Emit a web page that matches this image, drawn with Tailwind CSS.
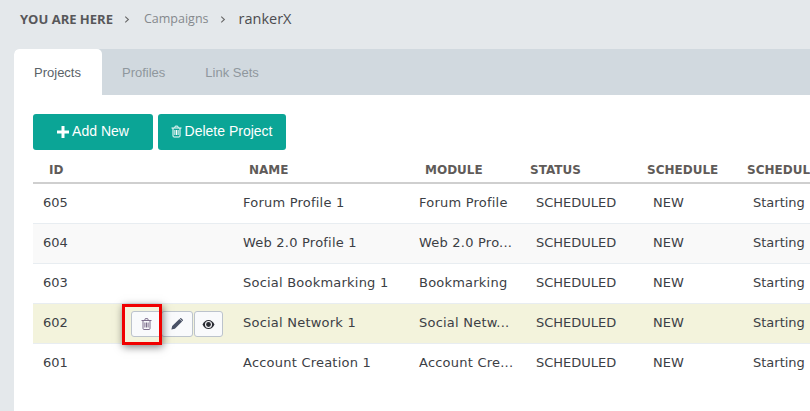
<!DOCTYPE html>
<html lang="en">
<head>
<meta charset="UTF-8" />
<title>Campaigns · rankerX</title>
<script src="https://cdn.jsdelivr.net/npm/@tailwindcss/browser@4"></script>
</head>
<body class="h-[411px] w-[810px] overflow-hidden bg-[#e4e8eb]">

  <!-- breadcrumb -->
  <div class="flex h-[49px] items-start pl-5 pt-[9px] font-['Open_Sans',sans-serif] text-[13px] leading-[20px]">
    <span class="font-bold text-[#57575a]">YOU ARE HERE</span>
    <svg class="ml-[11px] mt-[7px] h-[7px] w-[6px] text-[#666]" viewBox="0 0 6 8" fill="none" stroke="currentColor" stroke-width="1.2"><path d="M1 .7 4.600 4 1 7.300"/></svg>
    <span class="ml-[14px] text-[12.5px] text-[#85898d]">Campaigns</span>
    <svg class="ml-[11px] mt-[7px] h-[7px] w-[6px] text-[#666]" viewBox="0 0 6 8" fill="none" stroke="currentColor" stroke-width="1.2"><path d="M1 .7 4.600 4 1 7.300"/></svg>
    <span class="ml-[13px] text-[14.500px] text-[#4c4c50]">rankerX</span>
  </div>

  <!-- card -->
  <div class="relative ml-[14px] h-[362px] w-[796px] overflow-hidden rounded-tl-[5px] bg-white">
    <div class="flex h-[46px] bg-[#d1d9df] pt-px font-['Liberation_Sans',sans-serif] text-[13px]">
      <div class="-mt-px flex w-[88px] items-center justify-center rounded-t-[5px] bg-white pr-px pt-px text-[#5a6268]">Projects</div>
      <div class="flex items-center pl-5 text-[#8f979d]">Profiles</div>
      <div class="flex items-center pl-[40px] text-[#8f979d]">Link Sets</div>
    </div>

    <div class="flex gap-[5px] pl-[19px] pt-[19px] font-['Liberation_Sans',sans-serif] text-[14px] text-white">
      <button class="flex h-[36px] w-[120px] items-center justify-center gap-[3px] rounded-[3px] bg-[#0ba596] pb-px">
        <svg class="h-[12px] w-[12px]" viewBox="0 0 12 12" fill="currentColor"><path d="M4.500 0h3v4.500H12v3H7.500V12h-3V7.500H0v-3h4.500z"/></svg>
        Add New
      </button>
      <button class="flex h-[36px] w-[128px] items-center justify-center gap-[3px] rounded-[3px] bg-[#0ba596] pb-px pr-px">
        <svg class="h-[13px] w-[11px]" viewBox="0 0 11 12" fill="none" stroke="currentColor"><path d="M.5 2.500h10M2 2.500v8q0 1 1 1h5q1 0 1-1v-8M3.700 2.300 4.300.6h2.400l.6 1.700M3.900 4.500v5M5.500 4.500v5M7.100 4.500v5"/></svg>
        Delete Project
      </button>
    </div>

    <table class="ml-[19px] mt-[7px] w-[800px] table-fixed border-collapse font-['DejaVu_Sans',sans-serif] text-[13px] text-[#3c4045]">
      <colgroup>
        <col class="w-[90px]" />
        <col class="w-[110px]" />
        <col class="w-[176px]" />
        <col class="w-[117px]" />
        <col class="w-[117px]" />
        <col class="w-[100px]" />
        <col class="w-[90px]" />
      </colgroup>
      <thead>
        <tr class="h-[26px] border-b-2 border-[#cfcfcf] text-left text-[12px] font-bold text-[#5f5b59]">
          <th class="pl-4 font-bold">ID</th>
          <th></th>
          <th class="pl-4 font-bold">NAME</th>
          <th class="pl-4 font-bold">MODULE</th>
          <th class="pl-1 font-bold">STATUS</th>
          <th class="pl-1 font-bold">SCHEDULE</th>
          <th class="whitespace-nowrap pl-1 font-bold">SCHEDULE</th>
        </tr>
      </thead>
      <tbody>
        <tr class="h-[40px] border-b border-[#e8edf1] [&>td]:pb-[2px]">
          <td class="pl-[10px]">605</td><td></td>
          <td class="pl-[10px] tracking-[0.22px]">Forum Profile 1</td>
          <td class="whitespace-nowrap pl-[10px] tracking-[0.22px]">Forum Profile</td>
          <td class="pl-[10px]">SCHEDULED</td>
          <td class="pl-[10px]">NEW</td>
          <td class="whitespace-nowrap pl-[10px]">Starting</td>
        </tr>
        <tr class="h-[40px] border-b border-[#e8edf1] bg-[#f9f9f9]">
          <td class="pl-[10px]">604</td><td></td>
          <td class="pl-[10px] tracking-[0.22px]">Web 2.0 Profile 1</td>
          <td class="whitespace-nowrap pl-[10px] tracking-[0.22px]">Web 2.0 Pro...</td>
          <td class="pl-[10px]">SCHEDULED</td>
          <td class="pl-[10px]">NEW</td>
          <td class="whitespace-nowrap pl-[10px]">Starting</td>
        </tr>
        <tr class="h-[40px] border-b border-[#e8edf1]">
          <td class="pl-[10px]">603</td><td></td>
          <td class="pl-[10px] tracking-[0.22px]">Social Bookmarking 1</td>
          <td class="whitespace-nowrap pl-[10px] tracking-[0.22px]">Bookmarking</td>
          <td class="pl-[10px]">SCHEDULED</td>
          <td class="pl-[10px]">NEW</td>
          <td class="whitespace-nowrap pl-[10px]">Starting</td>
        </tr>
        <tr class="h-[40px] border-b border-[#e8edf1] bg-[#f3f3dc]">
          <td class="pl-[10px]">602</td>
          <td>
            <div class="flex pl-[8px] pt-[2px]">
              <button class="flex h-[26px] w-[31px] items-center justify-center rounded-[3px] border border-[#bcc3cc] bg-[#f9fafc]">
                <svg class="h-[12px] w-[11px] text-[#7d6f8c]" viewBox="0 0 11 12" fill="none" stroke="currentColor"><path d="M.5 2.500h10M2 2.500v8q0 1 1 1h5q1 0 1-1v-8M3.700 2.300 4.300.6h2.400l.6 1.700M3.900 4.500v5M5.500 4.500v5M7.100 4.500v5"/></svg>
              </button>
              <button class="ml-[-1px] flex h-[26px] w-[32px] items-center justify-center rounded-[3px] border border-[#bcc3cc] bg-[#f9fafc]">
                <svg class="h-[12px] w-[12px] text-[#4a5266]" viewBox="0 0 12 12" fill="currentColor"><path d="M8.400.9 11.100 3.600 3.900 10.800.4 11.600 1.200 8.100zM9.200.2q.5-.4 1 0l1.600 1.600q.4.5 0 1l-.4.4L8.800.6z"/></svg>
              </button>
              <button class="ml-[1px] flex h-[26px] w-[29px] items-center justify-center rounded-[3px] border border-[#bcc3cc] bg-[#f9fafc]">
                <svg class="h-[9px] w-[13px] text-[#2a2c33]" viewBox="0 0 12 9" fill="currentColor"><path fill-rule="evenodd" d="M6 0q3.800 0 6 4.500Q9.800 9 6 9T0 4.500Q2.200 0 6 0zM6 1A3.500 3.500 0 1 0 6 8 3.500 3.500 0 0 0 6 1z"/><circle cx="6" cy="4.500" r="2.400"/></svg>
              </button>
            </div>
          </td>
          <td class="pl-[10px] tracking-[0.22px]">Social Network 1</td>
          <td class="whitespace-nowrap pl-[10px] tracking-[0.22px]">Social Netw...</td>
          <td class="pl-[10px]">SCHEDULED</td>
          <td class="pl-[10px]">NEW</td>
          <td class="whitespace-nowrap pl-[10px]">Starting</td>
        </tr>
        <tr class="h-[40px] [&>td]:pb-[2px]">
          <td class="pl-[10px]">601</td><td></td>
          <td class="pl-[10px] tracking-[0.22px]">Account Creation 1</td>
          <td class="whitespace-nowrap pl-[10px] tracking-[0.22px]">Account Cre...</td>
          <td class="pl-[10px]">SCHEDULED</td>
          <td class="pl-[10px]">NEW</td>
          <td class="whitespace-nowrap pl-[10px]">Starting</td>
        </tr>
      </tbody>
    </table>

    <!-- red annotation over the delete button -->
    <div class="absolute left-[108px] top-[255px] h-[41px] w-[40px] border-[3px] border-[#f00000] shadow-[1px_2px_8px_rgba(0,0,0,0.5)]"></div>
  </div>
</body>
</html>
